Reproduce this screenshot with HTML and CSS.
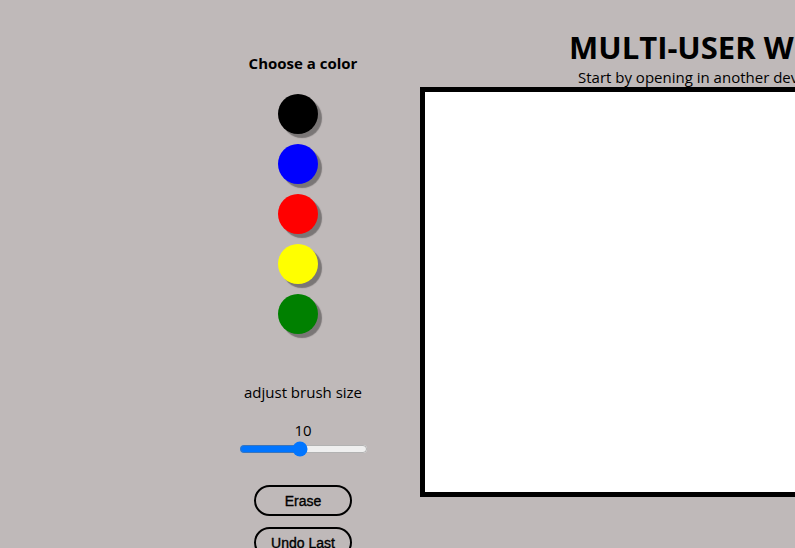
FILE: index.html
```html
<!DOCTYPE html>
<html>
<head>
<meta charset="utf-8">
<link rel="stylesheet" href="styles.css">
</head>
<body>
<div class="page">
  <aside class="tools">
    <h4 class="tools-title">Choose a color</h4>
    <div class="swatches">
      <div class="swatch black"></div>
      <div class="swatch blue"></div>
      <div class="swatch red"></div>
      <div class="swatch yellow"></div>
      <div class="swatch green"></div>
    </div>
    <p class="brush-label">adjust brush size</p>
    <p class="brush-value">10</p>
    <input class="brush-range" type="range" min="1" max="20" value="10">
    <button class="btn">Erase</button>
    <button class="btn">Undo Last</button>
  </aside>
  <main class="board">
    <h1 class="board-title">MULTI-USER WHITEBOARD</h1>
    <p class="board-sub">Start by opening in another device to draw together</p>
    <div class="canvas"></div>
  </main>
</div>
</body>
</html>
```
FILE: styles.css
```css
html, body {
  margin: 0;
  padding: 0;
  background: #bfb9b9;
  overflow: hidden;
  font-family: "Open Sans", "Noto Sans", sans-serif;
  color: #000;
}
.page {
  display: flex;
  align-items: flex-start;
  padding-left: 200px;
  width: 1400px;
  gap: 14px;
}
.tools {
  width: 206px;
  display: flex;
  flex-direction: column;
  align-items: center;
  padding-top: 52px;
}
.tools-title {
  margin: 0;
  font-size: 15px;
  font-weight: 700;
  line-height: 22px;
}
.swatches {
  display: flex;
  flex-direction: column;
  gap: 10px;
  margin-top: 20px;
  margin-right: 10px;
}
.swatch {
  width: 40px;
  height: 40px;
  border-radius: 50%;
  box-shadow: 4px 4px 1px #7a7676;
}
.black { background: #000; }
.blue { background: #0000ff; }
.red { background: #ff0000; }
.yellow { background: #ffff00; }
.green { background: #008000; }
.brush-label {
  margin: 47px 0 0;
  font-size: 15px;
  line-height: 22px;
}
.brush-value {
  margin: 16px 0 0;
  font-size: 15px;
  line-height: 22px;
}
.brush-range {
  width: 129px;
  margin: 0;
  height: 16px;
}
.btn {
  width: 98px;
  height: 31px;
  border: 2px solid #000;
  border-radius: 16px;
  background: transparent;
  font-family: "Liberation Sans", Arial, sans-serif;
  font-size: 14px;
  font-weight: 400;
  -webkit-text-stroke: 0.35px #000;
  color: #000;
  padding: 0;
}
.btn + .btn {
  margin-top: 11px;
}
.tools .btn:first-of-type {
  margin-top: 28px;
}
.board {
  display: flex;
  flex-direction: column;
}
.board-title {
  margin: 28px 0 0 149px;
  font-size: 31px;
  font-weight: 700;
  line-height: 38px;
  white-space: nowrap;
}
.board-sub {
  margin: 1px 0 0 158px;
  font-size: 15px;
  line-height: 20px;
  white-space: nowrap;
}
.canvas {
  width: 800px;
  height: 400px;
  border: 5px solid #000;
  background: #fff;
}
```
